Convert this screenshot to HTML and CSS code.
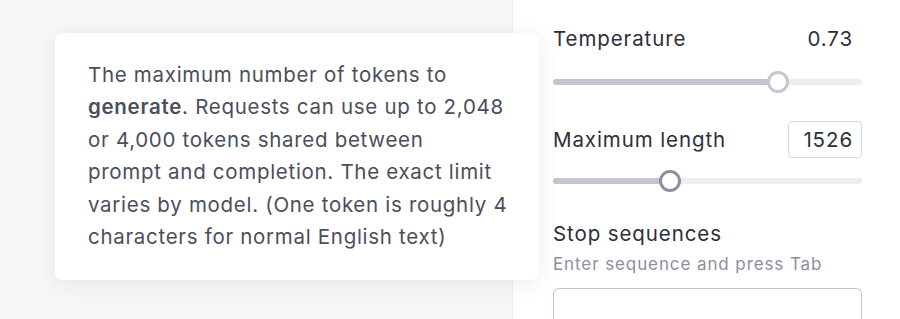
FILE: index.html
```html
<!DOCTYPE html>
<html>
<head>
<meta charset="utf-8">
<link rel="stylesheet" href="styles.css">
</head>
<body>
<div class="layout">
  <main class="main"></main>
  <aside class="panel">
    <div class="row row-temp">
      <span class="label">Temperature</span>
      <span class="value">0.73</span>
    </div>
    <div class="slider slider-temp">
      <div class="track"><div class="fill" style="width:72.8%"></div></div>
      <div class="thumb" style="left:72.8%"></div>
    </div>
    <div class="row row-len">
      <span class="label">Maximum length</span>
      <span class="num-box">1526</span>
    </div>
    <div class="slider slider-len">
      <div class="track"><div class="fill" style="width:37.9%"></div></div>
      <div class="thumb thumb-active" style="left:37.9%"></div>
    </div>
    <div class="stop-label">Stop sequences</div>
    <div class="hint">Enter sequence and press Tab</div>
    <div class="seq-input"></div>
  </aside>
</div>
<div class="tooltip">
  The maximum number of tokens to<br>
  <strong>generate</strong>. Requests can use up to 2,048<br>
  or 4,000 tokens shared between<br>
  prompt and completion. The exact limit<br>
  varies by model. (One token is roughly 4<br>
  characters for normal English text)
</div>
</body>
</html>
```
FILE: styles.css
```css
html, body {
  margin: 0;
  padding: 0;
  height: 100%;
  overflow: hidden;
}
body {
  font-family: Inter, "Noto Sans", sans-serif;
  background: #ffffff;
}
.layout {
  display: flex;
  height: 319px;
  overflow: hidden;
}
.main {
  width: 512px;
  flex-shrink: 0;
  background: #f7f7f8;
  border-right: 1px solid #ececef;
}
.panel {
  flex: 1;
  padding: 20px 38px 0 40px;
  overflow: hidden;
}
.row {
  display: flex;
  justify-content: space-between;
  align-items: center;
  color: #2e2f38;
  font-size: 20.5px;
  letter-spacing: 0.9px;
}
.row-temp {
  height: 36px;
}
.value {
  padding-right: 9px;
}
.slider {
  position: relative;
  height: 22px;
  display: flex;
  align-items: center;
}
.slider-temp {
  margin-top: 15px;
}
.track {
  width: 100%;
  height: 6px;
  border-radius: 3px;
  background: #ececf1;
  overflow: hidden;
}
.fill {
  height: 100%;
  background: #c5c5d2;
}
.thumb {
  position: absolute;
  top: 0;
  width: 16px;
  height: 16px;
  margin-left: -11px;
  border: 3px solid #c5c5d2;
  border-radius: 50%;
  background: #fff;
}
.thumb-active {
  border-color: #8e8ea0;
}
.row-len {
  margin-top: 28px;
  height: 37px;
}
.num-box {
  box-sizing: border-box;
  width: 74px;
  height: 37px;
  border: 1px solid #d9d9e3;
  border-radius: 4px;
  display: flex;
  align-items: center;
  justify-content: flex-end;
  padding-right: 8px;
  color: #2e2f38;
}
.slider-len {
  margin-top: 12px;
}
.stop-label {
  margin-top: 28px;
  font-size: 20.5px;
  letter-spacing: 0.9px;
  line-height: 28px;
  color: #2e2f38;
}
.hint {
  margin-top: 4px;
  font-size: 17px;
  letter-spacing: 0.9px;
  line-height: 24px;
  color: #8e8ea0;
}
.seq-input {
  margin-top: 12px;
  height: 30px;
  border: 1px solid #c5c5d2;
  border-bottom: none;
  border-radius: 6px 6px 0 0;
}
.tooltip {
  position: absolute;
  left: 55px;
  top: 33px;
  width: 418px;
  height: 221px;
  padding: 26px 33px 0 33px;
  background: #fff;
  border-radius: 6px;
  box-shadow: 0 4px 24px rgba(0, 0, 0, 0.07), 0 0 1px rgba(0, 0, 0, 0.08);
  font-size: 20.5px;
  letter-spacing: 0.7px;
  line-height: 32.4px;
  white-space: nowrap;
  color: #4d4e5c;
}
.tooltip strong {
  font-weight: 600;
}
```
